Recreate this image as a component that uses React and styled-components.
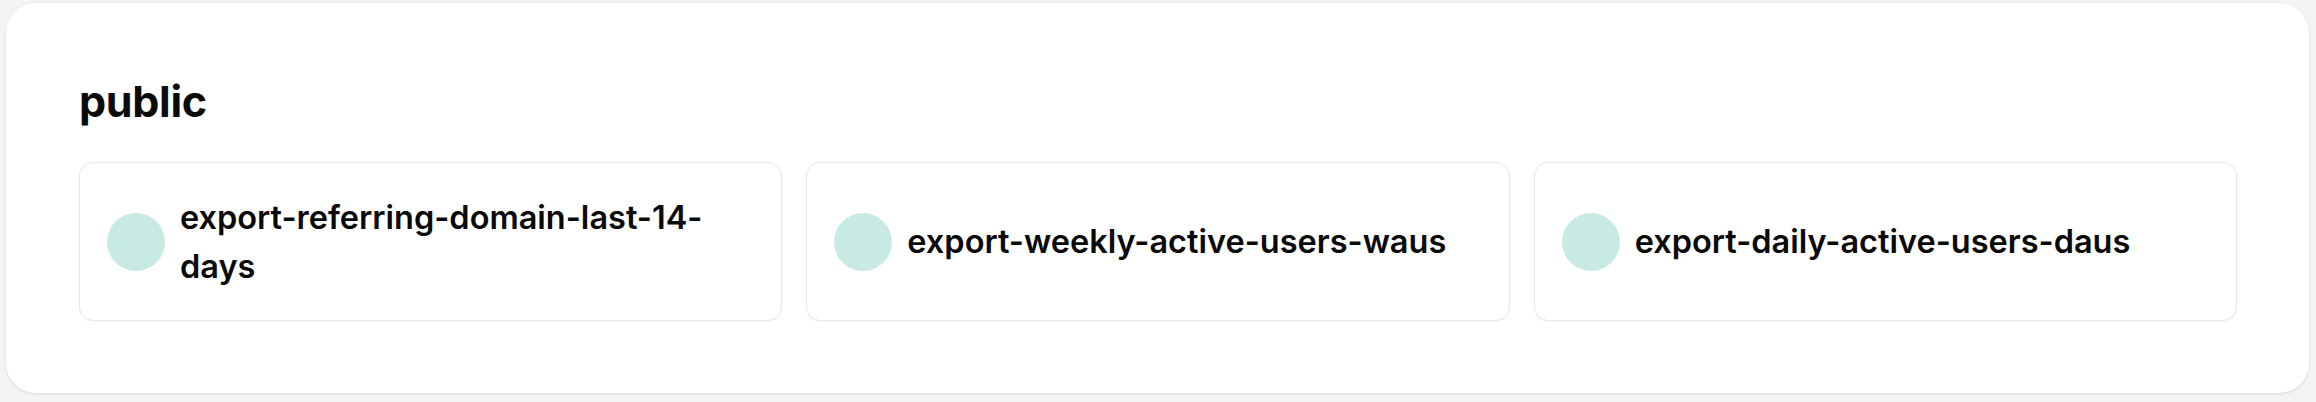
import React from "react";
import styled, { createGlobalStyle } from "styled-components";

const GlobalStyle = createGlobalStyle`
  html, body {
    margin: 0;
    padding: 0;
    background: #f3f4f6;
    font-family: Inter, "Noto Sans", sans-serif;
    color: #0a0a0a;
  }
`;

const Page = styled.div`
  padding: 3px 7px 9px 6px;
`;

const Panel = styled.section`
  background: #ffffff;
  border-radius: 30px;
  box-shadow: 0 1px 3px rgba(0, 0, 0, 0.12);
  padding: 72px 72px 72px 73px;
`;

const Title = styled.h2`
  margin: 0 0 35px;
  font-size: 43px;
  line-height: 52px;
  font-weight: 700;
  letter-spacing: -0.3px;
`;

const Grid = styled.div`
  display: grid;
  grid-template-columns: repeat(3, 1fr);
  gap: 24px;
`;

const Card = styled.div`
  display: flex;
  align-items: center;
  gap: 15px;
  min-height: 159px;
  box-sizing: border-box;
  padding: 29px 28px 29px 27px;
  background: #fff;
  border: 1px solid #e5e7eb;
  border-radius: 14px;
  box-shadow: 0 1px 2px rgba(0, 0, 0, 0.03);
`;

const Dot = styled.span`
  flex: none;
  width: 58px;
  height: 58px;
  border-radius: 50%;
  background: ${({ color }) => color || "#c8eae4"};
`;

const Name = styled.span`
  font-size: 32.5px;
  line-height: 49px;
  font-weight: 600;
  color: #0a0a0a;
`;

const items = [
  "export-referring-domain-last-14-days",
  "export-weekly-active-users-waus",
  "export-daily-active-users-daus",
];

export default function App() {
  return (
    <Page>
      <GlobalStyle />
      <Panel>
        <Title>public</Title>
        <Grid>
          {items.map((name) => (
            <Card key={name}>
              <Dot />
              <Name>{name}</Name>
            </Card>
          ))}
        </Grid>
      </Panel>
    </Page>
  );
}
